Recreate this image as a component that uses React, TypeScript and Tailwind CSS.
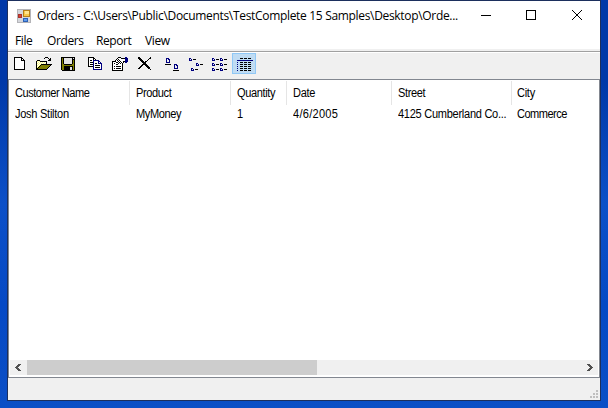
import React from 'react';

const palette: Record<string, string> = {
  k: '#000000', w: '#ffffff', y: '#ffff80', o: '#808000', b: '#000080',
  g: '#808080', l: '#e4e4e4', s: '#505050',
};

function Pixels({ rows, className = '' }: { rows: string[]; className?: string }) {
  const w = Math.max(...rows.map((r) => r.length));
  return (
    <svg width={w} height={rows.length} shapeRendering="crispEdges" className={'block shrink-0 ' + className}>
      {rows.flatMap((row, y) =>
        [...row].map((p, x) =>
          palette[p] ? <rect key={x + '-' + y} x={x} y={y} width="1" height="1" fill={palette[p]} /> : null
        )
      )}
    </svg>
  );
}

const newIcon = [
  'kkkkkkkk', 'kwwwwwwkk', 'kwwwwwwkwk', 'kwwwwwwkkkk', 'kwwwwwwwwwk', 'kwwwwwwwwwk', 'kwwwwwwwwwk',
  'kwwwwwwwwwk', 'kwwwwwwwwwk', 'kwwwwwwwwwk', 'kwwwwwwwwwk', 'kwwwwwwwwwk', 'kkkkkkkkkkk',
];
const openIcon = [
  '.........kkk....', '........k...k.k.', '.............kk.', '.kkk........kkk.', 'kywykkkkkkk.....', 'kwywywywywk.....',
  'kywywywywyk.....', 'kwywykkkkkkkkkkk', 'kywykoooooooook.', 'kwykoooooooook..', 'kykoooooooook...', 'kkoooooooook....', 'kkkkkkkkkkk.....',
];
const saveIcon = [
  'kkkkkkkkkkkkkk', 'kokllllllllklk', 'kokllllllllkkk', 'kokllllllllkok', 'kokllllllllkok', 'kokllllllllkok', 'kokllllllllkok',
  'kookkkkkkkkook', 'kooooooooooook', 'kookkkkkkkkkok', 'kookkkkkkllkok', 'kookkkkkkllkok', 'kookkkkkkllkok', '.kkkkkkkkkkkkk',
];
const copyIcon = [
  'kkkkkk.........', 'kwwwwkk........', 'kwwwwkwk.......', 'kwkkwbbbbbb....', 'kwwwwbwwwwbb...', 'kwkkkbwwwwbwb..', 'kwwwwbwkkwbbbb.',
  'kwkkkbwwwwwwwb.', 'kwwwwbwkkkkkwb.', 'kkkkkbwwwwwwwb.', '.....bwkkkkkwb.', '.....bwwwwwwwb.', '.....bbbbbbbbb.',
];
const propIcon = [
  '......kkk....bb.', '.....kwwwkkkkbbb', '....kwkwwwwwwbbb', '...kwkwkwwwwwbbb', 'kkkkwwkwkwwkkbbb', 'kwwwkkwkwkwk.bb.', 'kwkwwwkwkwk.....',
  'kwwwkkwwwwk.....', 'kwwwwwwwwwk.....', 'kwkwkkkkkwk.....', 'kwwwwwwwwwk.....', 'kwkwkkkkkwk.....', 'kwwwwwwwwwk.....', 'kkkkkkkkkkk.....',
];
const deleteIcon = [
  'kk..........k.', 'kkk........kk.', '.kkk......k...', '..kkk....k....', '...kkk.kk.....', '....kkkk......', '.....kkk......',
  '....kkkkk.....', '...kk..kkk....', '..kk....kkk...', '.kk......kkk..', 'kk........kk..', '............k',
];
const largeIcon = [
  '.bbb..........', '.b.bb.........', '.b..b.........', '.b..b.........', '.bbbb.........', '..............',
  'kkkkkk...bbb..', '.........b.bb.', '.........b..b.', '.........b..b.', '.........bbbb.', '..............', '........kkkkkk',
];
const smallIcon = [
  'bb............', 'b.b.kkk.......', 'bbb...........', '..............', '..............', '.......bb.....', '.......b.b.kkk',
  '.......bbb....', '..............', '..............', '..bb..........', '..b.b.kkk.....', '..bbb.........',
];
const listIcon = [
  'bb......bb.....', 'b.b.kkk.b.b.kkk', 'bbb.....bbb....', '...............', '...............', 'bb......bb.....', 'b.b.kkk.b.b.kkk',
  'bbb.....bbb....', '...............', '...............', 'bb......bb.....', 'b.b.kkk.b.b.kkk', 'bbb.....bbb....',
];
const reportIcon = [
  '...kkk.kkk.kkk..', '................', 'bbbbbbbbbbbbbbbb', '................', 'b..kkk.kkk.kkk..', '................', 'b..kkk.kkk.kkk..',
  '................', 'b..kkk.kkk.kkk..', '................', 'b..kkk.kkk.kkk..', '................', 'b..kkk.kkk.kkk..',
];
const leftArrow = ['...sss', '..sss.', '.sss..', 'sss...', '.sss..', '..sss.', '...sss'];

function AppIcon() {
  return (
    <svg width="14" height="14" className="block shrink-0">
      <rect x=".5" y=".5" width="13" height="13" fill="#d4d6dc" stroke="#b4b4b8" />
      <rect x="6.5" y="1.5" width="6" height="6" fill="#f8c849" stroke="#b68019" />
      <rect x="8" y="2" width="4" height="3" fill="#ffe58e" />
      <rect x="1.5" y="5.5" width="3" height="3" fill="#d84030" stroke="#a8332c" />
      <rect x="6.5" y="9.5" width="4" height="3" fill="#5b9bf0" stroke="#2d61b5" />
    </svg>
  );
}

const columns = [
  { name: 'Customer Name', value: 'Josh Stilton', cls: 'w-[121px] pl-[6px]', title: 'tracking-[-0.5px]', text: 'tracking-[-0.3px]' },
  { name: 'Product', value: 'MyMoney', cls: 'w-[101px] pl-[6px]', title: 'tracking-[-0.4px]', text: 'tracking-[-0.4px]' },
  { name: 'Quantity', value: '1', cls: 'w-[56px] pl-[6px]', title: 'tracking-[-0.4px]', text: '' },
  { name: 'Date', value: '4/6/2005', cls: 'w-[105px] pl-[6px]', title: 'tracking-[-0.3px]', text: 'tracking-[0.3px]' },
  { name: 'Street', value: '4125 Cumberland Co...', cls: 'w-[120px] pl-[6px]', title: 'tracking-[-0.4px]', text: 'tracking-[-0.3px]' },
  { name: 'City', value: 'Commerce', cls: 'w-[87px] pl-[5px]', title: 'tracking-[-0.3px]', text: 'tracking-[-0.55px]' },
];

export default function App() {
  return (
    <div className="h-[408px] w-[608px] overflow-hidden bg-[linear-gradient(180deg,#0038a8_0%,#0038a8_20%,#0c50c8_50%,#0549c5_75%,#0b4fc6_100%)] pl-[7px] text-black">
      <div className="flex h-[401px] w-[594px] flex-col border border-[#1c2f5d] bg-white">
        <header className="flex h-[30px] items-center pl-[9px] font-['Open_Sans','Noto_Sans',sans-serif] text-[12px]">
          <AppIcon />
          <span className="ml-[6px] w-[442px] whitespace-nowrap tracking-[-0.32px]">
            Orders - C:\Users\Public\Documents\TestComplete 15 Samples\Desktop\Orde...
          </span>
          <svg width="104" height="12" className="ml-[2px] block shrink-0" fill="none" stroke="#000">
            <path d="M0 5.5H10" />
            <rect x="45.5" y=".5" width="9" height="9" />
            <path d="M91 0l10 10M101 0L91 10" />
          </svg>
        </header>
        <nav className="flex h-[18px] items-center pt-[2px] font-['Open_Sans','Noto_Sans',sans-serif] text-[12px] leading-[18px] tracking-[-0.4px]">
          <span className="w-[39px] pl-[7px]">File</span>
          <span className="w-[49px]">Orders</span>
          <span className="w-[49px]">Report</span>
          <span>View</span>
        </nav>
        <div className="h-[2px] bg-[#f0f0f0]" />
        <div className="h-px bg-[#a0a0a0]" />
        <div className="h-px bg-white" />
        <div className="flex h-[26px] items-start bg-[#f0f0f0] pl-[6px]">
          <Pixels rows={newIcon} className="mt-[4px]" />
          <Pixels rows={openIcon} className="mt-[4px] ml-[11px]" />
          <Pixels rows={saveIcon} className="mt-[4px] ml-[9px]" />
          <Pixels rows={copyIcon} className="mt-[4px] ml-[13px]" />
          <Pixels rows={propIcon} className="mt-[4px] ml-[9px]" />
          <Pixels rows={deleteIcon} className="mt-[4px] ml-[10px]" />
          <Pixels rows={largeIcon} className="mt-[5px] ml-[13px]" />
          <Pixels rows={smallIcon} className="mt-[5px] ml-[10px]" />
          <Pixels rows={listIcon} className="mt-[5px] ml-[9px]" />
          <div className="ml-[5px] h-[21px] w-[24px] border border-[#90c8f6] bg-[#c0dcf3] pt-[4px] pl-[4px]">
            <Pixels rows={reportIcon} />
          </div>
        </div>
        <main className="flex h-[299px] flex-col border border-[#828790] bg-white font-['Liberation_Sans',Arial,sans-serif] text-[12px]">
          <div className="flex h-[26px] pt-px">
            {columns.map((c, i) => (
              <div key={c.name} className={'h-[24px] shrink-0 leading-[24px] whitespace-nowrap ' + c.cls + ' ' + c.title + (i < 5 ? ' border-r border-[#e5e5e5]' : '')}>
                <span className="inline-block origin-left scale-x-[0.92]">{c.name}</span>
              </div>
            ))}
          </div>
          <div className="flex h-[17px]">
            {columns.map((c) => (
              <div key={c.name} className={'shrink-0 leading-[17px] whitespace-nowrap ' + c.cls + ' ' + c.text}>
                <span className="inline-block origin-left scale-x-[0.92]">{c.value}</span>
              </div>
            ))}
          </div>
          <div className="flex-1" />
          <div className="mx-px mb-[2px] flex h-[15px] items-center justify-between bg-[#f0f0f0] pr-[5px]">
            <div className="flex h-full items-center">
              <Pixels rows={leftArrow} className="mx-[5px] w-[7px]" />
              <div className="h-full w-[290px] bg-[#cdcdcd]" />
            </div>
            <Pixels rows={leftArrow} className="rotate-180" />
          </div>
        </main>
        <footer className="flex flex-1 items-end justify-end bg-[#f0f0f0] pr-[2px] pb-[2px]">
          <svg width="8" height="8" className="block" fill="#bfbfbf">
            <path d="M6 0h2v2H6zM3 3h2v2H3zM6 3h2v2H6zM0 6h2v2H0zM3 6h2v2H3zM6 6h2v2H6z" />
          </svg>
        </footer>
      </div>
    </div>
  );
}
